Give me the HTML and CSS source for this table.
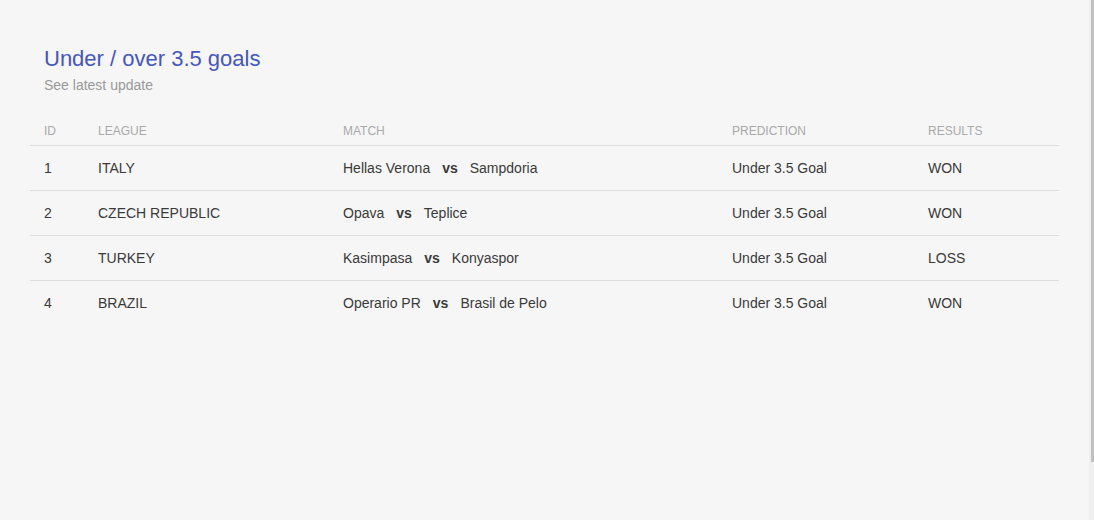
FILE: index.html
```html
<!DOCTYPE html>
<html lang="en">
<head>
<meta charset="utf-8">
<title>Under / over 3.5 goals</title>
<link rel="stylesheet" href="styles.css">
</head>
<body>
<div class="page">
  <div class="card">
    <div class="card-header">
      <h4 class="card-title">Under / over 3.5 goals</h4>
      <p class="card-category">See latest update</p>
    </div>
    <div class="table">
      <div class="row head">
        <div class="cell">ID</div>
        <div class="cell">League</div>
        <div class="cell">Match</div>
        <div class="cell">Prediction</div>
        <div class="cell">Results</div>
      </div>
      <div class="row">
        <div class="cell">1</div>
        <div class="cell">ITALY</div>
        <div class="cell">Hellas Verona<b class="vs">vs</b>Sampdoria</div>
        <div class="cell">Under 3.5 Goal</div>
        <div class="cell">WON</div>
      </div>
      <div class="row">
        <div class="cell">2</div>
        <div class="cell">CZECH REPUBLIC</div>
        <div class="cell">Opava<b class="vs">vs</b>Teplice</div>
        <div class="cell">Under 3.5 Goal</div>
        <div class="cell">WON</div>
      </div>
      <div class="row">
        <div class="cell">3</div>
        <div class="cell">TURKEY</div>
        <div class="cell">Kasimpasa<b class="vs">vs</b>Konyaspor</div>
        <div class="cell">Under 3.5 Goal</div>
        <div class="cell">LOSS</div>
      </div>
      <div class="row last">
        <div class="cell">4</div>
        <div class="cell">BRAZIL</div>
        <div class="cell">Operario PR<b class="vs">vs</b>Brasil de Pelo</div>
        <div class="cell">Under 3.5 Goal</div>
        <div class="cell">WON</div>
      </div>
    </div>
  </div>
</div>
<div class="scrollbar"><div class="thumb"></div></div>
</body>
</html>
```

FILE: styles.css
```css
html, body {
  margin: 0;
  padding: 0;
  background: #f6f6f6;
  height: 100%;
  overflow: hidden;
}
body {
  font-family: "Liberation Sans", Arial, sans-serif;
  color: #3a3a3a;
}
.page {
  padding: 0 35px 0 30px;
}
.card-header {
  padding: 45px 14px 0 14px;
}
.card-title {
  margin: 0;
  font-size: 22px;
  font-weight: 400;
  line-height: 28px;
  color: #4557bf;
}
.card-category {
  margin: 2px 0 0 0;
  font-size: 14px;
  line-height: 20px;
  color: #999;
}
.table {
  margin-top: 29px;
  width: 1029px;
}
.row {
  display: grid;
  grid-template-columns: 54px 245px 389px 196px 145px;
  border-bottom: 1px solid #dddddd;
  height: 44px;
  align-items: center;
  font-size: 14px;
}
.row.last {
  border-bottom: none;
}
.row.head {
  height: 21px;
  align-items: start;
  font-size: 12px;
  color: #a9a9a9;
  text-transform: uppercase;
}
.cell {
  padding-left: 14px;
  white-space: nowrap;
}
.vs {
  margin: 0 12px;
  font-weight: 700;
}
.scrollbar {
  position: fixed;
  top: 0;
  right: 0;
  width: 5px;
  height: 100%;
  background: #efefef;
}
.thumb {
  margin-left: 2px;
  width: 3px;
  height: 462px;
  background: #c1c1c1;
}
```
